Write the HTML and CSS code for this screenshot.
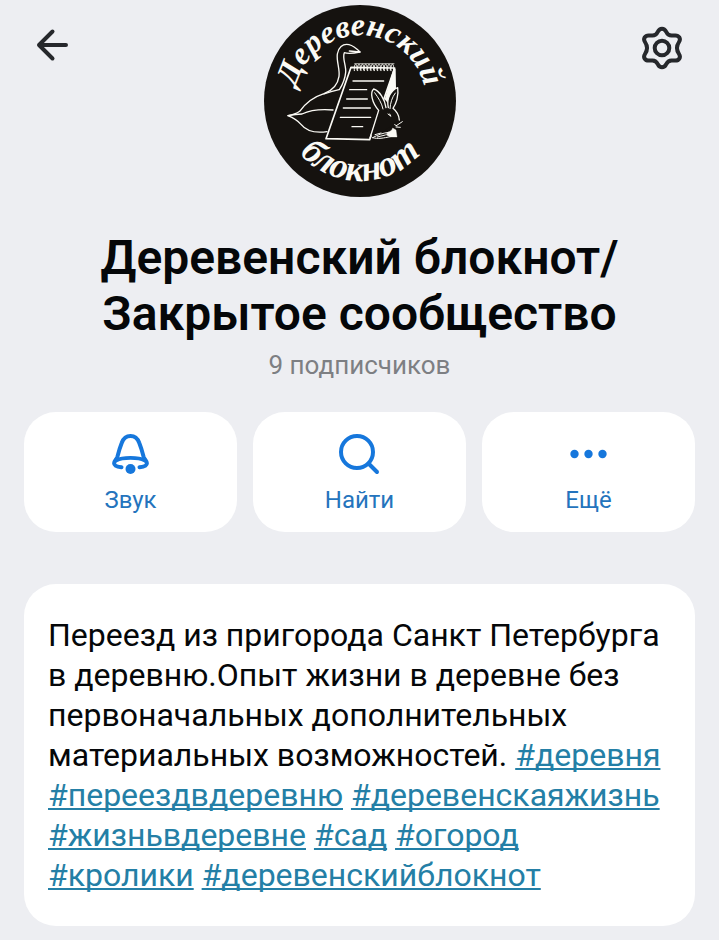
FILE: index.html
```html
<!DOCTYPE html>
<html lang="ru">
<head>
<meta charset="utf-8">
<meta name="viewport" content="width=device-width, initial-scale=1">
<title>Деревенский блокнот</title>
<link rel="stylesheet" href="styles.css">
</head>
<body>
<header class="top">
  <button class="icon-button" type="button" aria-label="Назад">
    <svg viewBox="0 0 44 44" fill="none" stroke="currentColor" stroke-width="4" stroke-linecap="round" stroke-linejoin="round"><path d="M17.500 5.500L4 19l13.500 13.500M4 19h27"/></svg>
  </button>
  <svg class="avatar" viewBox="12 15 576 576" role="img" aria-label="Деревенский блокнот">
    <defs>
      <path id="arc-top" d="M103 335L103 303a197 197 0 0 1 394 0L497 335"/>
      <path id="arc-bottom" d="M60 303a240 240 0 0 0 480 0"/>
    </defs>
    <circle cx="300" cy="303" r="288" fill="#15120f"/>
    <text class="logo-text logo-text-top"><textPath href="#arc-top" startOffset="50%">Деревенский</textPath></text>
    <text class="logo-text logo-text-bottom"><textPath href="#arc-bottom" startOffset="50%">блокнот</textPath></text>
    <g fill="none" stroke="#fbfaf5" stroke-width="4" stroke-linecap="round" stroke-linejoin="round">
      <path d="M268 153L300 156C291 147 280 137 267 134C247 130 235 143 232 162C229 184 240 207 237 229C233 257 216 272 192 281C157 292 137 309 119 334C108 342 96 345 84 347C101 354 113 362 123 373C139 393 166 400 201 395"/>
      <path d="M253 158C263 162 278 161 300 156M253 158C246 174 259 196 257 217C255 240 247 255 238 269M237 269C218 273 205 277 192 282M126 342C153 329 184 327 219 330M84 347C98 344 112 342 126 342"/>
      <path fill="#15120f" d="M273 202L404 204L329 419L198 416Z" stroke-width="5"/>
      <path d="M279 243H371M269 269H320M260 297H322M250 324H331M241 352H332M276 380H308"/>
      <path stroke-width="3" d="M283 212c-2-26 10-26 8-2M293 212c-2-26 10-26 8-2M303 212c-2-26 10-26 8-2M313 212c-2-26 10-26 8-2M323 212c-2-26 10-26 8-2M333 212c-2-26 10-26 8-2M343 212c-2-26 10-26 8-2M353 212c-2-26 10-26 8-2M363 212c-2-26 10-26 8-2M373 212c-2-26 10-26 8-2M383 212c-2-26 10-26 8-2M393 212c-2-26 10-26 8-2"/>
      <path d="M284 191H402" stroke-width="2"/>
      <path fill="#fbfaf5" stroke="none" d="M401 204L407 207L408 265C394 276 387 290 385 311L374 298Z"/>
      <path fill="#15120f" stroke="none" d="M356 331C336 309 329 277 341 267C358 272 375 298 378 323L385 323C378 295 394 270 413 263C417 287 408 312 399 325C410 334 419 352 419 368C411 383 399 384 390 380C371 391 351 405 338 413L332 400L354 335Z"/>
      <path d="M356 331C336 309 329 277 341 267C358 272 375 298 378 323M385 323C378 295 394 270 413 263C417 287 408 312 399 325C410 334 417 347 418 360M356 331L330 414"/>
      <path fill="#fbfaf5" stroke-width="1" d="M385 396C393 394 397 389 398 384L408 390L411 411L391 411L378 404Z"/>
      <path stroke-width="3" d="M344 278C354 292 366 310 369 327M406 279C396 292 391 309 390 326M384 342L393 349L389 342M409 377L427 365M408 381L421 382M404 374L411 378M338 413C354 404 369 399 386 397M338 413C354 418 371 414 391 410M345 404L363 399M352 411L376 405"/>
    </g>
  </svg>
  <button class="icon-button" type="button" aria-label="Настройки">
    <svg viewBox="0 0 44 44" fill="none" stroke="currentColor" stroke-width="4"><path d="M22 2.800C24 2.800 25.200 3.900 26 5.500C27.500 8.700 29 9.800 32 9.600L35 9.400C39 9.200 41.200 12.700 39 16C36.300 20 36.300 24 39 28C41.200 31.300 39 34.800 35 34.600L32 34.400C29 34.200 27.500 35.300 26 38.500C25.200 40.100 24 41.200 22 41.200C20 41.200 18.800 40.100 18 38.500C16.500 35.300 15 34.200 12 34.400L9 34.600C5 34.800 2.800 31.300 5 28C7.700 24 7.700 20 5 16C2.800 12.700 5 9.200 9 9.400L12 9.600C15 9.800 16.500 8.700 18 5.500C18.800 3.900 20 2.800 22 2.800Z"/><circle cx="22" cy="22" r="7.300"/></svg>
  </button>
</header>
<main class="page">
  <h1 class="title">Деревенский блокнот/<br>Закрытое сообщество</h1>
  <p class="members">9 подписчиков</p>
  <div class="actions">
    <button class="action" type="button">
      <svg viewBox="0 0 44 44" fill="none" stroke="currentColor" stroke-width="4" stroke-linecap="round"><path d="M12.500 35.300C8 34.700 5.100 33.200 5.100 31.200C5.100 29 7.700 27.200 8.400 24.800C10 18.500 11.500 14 12.800 10.800C14.500 6.200 17.500 4 21.500 4C25.500 4 28.500 6.200 30.200 10.800C31.500 14 33 18.500 34.600 24.800C35.300 27.200 37.900 29 37.900 31.200C37.900 33.200 35 34.700 30.500 35.300"/><path d="M7.500 28.500C10.500 26.700 15.500 25.900 21.500 25.900S32.500 26.700 35.500 28.500" stroke-width="3.600"/><circle cx="21.500" cy="37" r="5" fill="currentColor" stroke="none"/></svg>
      <span>Звук</span>
    </button>
    <button class="action" type="button">
      <svg viewBox="0 0 44 44" fill="none" stroke="currentColor" stroke-width="4" stroke-linecap="round"><circle cx="19" cy="20" r="16"/><path d="M30.500 31.500L39 40"/></svg>
      <span>Найти</span>
    </button>
    <button class="action" type="button">
      <svg viewBox="0 0 44 44" fill="currentColor"><circle cx="7.500" cy="22" r="4.200"/><circle cx="21.500" cy="22" r="4.200"/><circle cx="35.500" cy="22" r="4.200"/></svg>
      <span>Ещё</span>
    </button>
  </div>
  <section class="about">
    <p>Переезд из пригорода Санкт Петербурга<br>в деревню.Опыт жизни в деревне без первоначальных дополнительных материальных возможностей. <a href="#">#деревня</a> <a href="#">#переездвдеревню</a> <a href="#">#деревенскаяжизнь</a> <a href="#">#жизньвдеревне</a> <a href="#">#сад</a> <a href="#">#огород</a><br><a href="#">#кролики</a> <a href="#">#деревенскийблокнот</a></p>
  </section>
</main>
</body>
</html>
```
FILE: styles.css
```css
* {
  box-sizing: border-box;
}

body {
  margin: 0;
  background: #edeef2;
  color: #050709;
  font-family: Roboto, "Noto Sans", sans-serif;
}

button {
  border: 0;
  padding: 0;
  font: inherit;
  cursor: pointer;
}

.top {
  display: flex;
  justify-content: space-between;
  align-items: flex-start;
  padding: 5px 35px 0;
}

.icon-button {
  width: 44px;
  height: 44px;
  margin-top: 21px;
  background: none;
  color: #26282c;
}

.icon-button svg,
.action svg,
.avatar {
  display: block;
}

.avatar {
  width: 192px;
  height: 192px;
}

.logo-text {
  fill: #fbfaf5;
  font-family: "Liberation Serif", serif;
  font-style: italic;
  font-weight: bold;
  text-anchor: middle;
}

.logo-text-top {
  font-size: 96px;
}

.logo-text-bottom {
  font-size: 108px;
}

.page {
  padding: 33px 24px 14px;
}

.title {
  margin: 0;
  font-size: 48px;
  font-weight: 600;
  line-height: 56px;
  text-align: center;
}

.members {
  margin: 7px 0 0;
  color: #7d7f83;
  font-size: 26px;
  line-height: 32px;
  text-align: center;
}

.actions {
  display: grid;
  grid-template-columns: repeat(3, 1fr);
  gap: 16px;
  margin-top: 31px;
}

.action {
  display: flex;
  flex-direction: column;
  align-items: center;
  gap: 8px;
  padding: 20px 8px 16px;
  border-radius: 32px;
  background: #fff;
  color: #1677dc;
}

.action svg {
  width: 44px;
  height: 44px;
}

.action span {
  color: #2474bd;
  font-size: 24px;
  line-height: 32px;
}

.about {
  margin-top: 52px;
  padding: 31px 24px;
  border-radius: 32px;
  background: #fff;
}

.about p {
  margin: 0;
  font-size: 32px;
  line-height: 40px;
}

.about a {
  color: #247fa6;
  text-decoration: underline 2px;
  text-decoration-skip-ink: none;
  text-underline-offset: 2px;
}
```
